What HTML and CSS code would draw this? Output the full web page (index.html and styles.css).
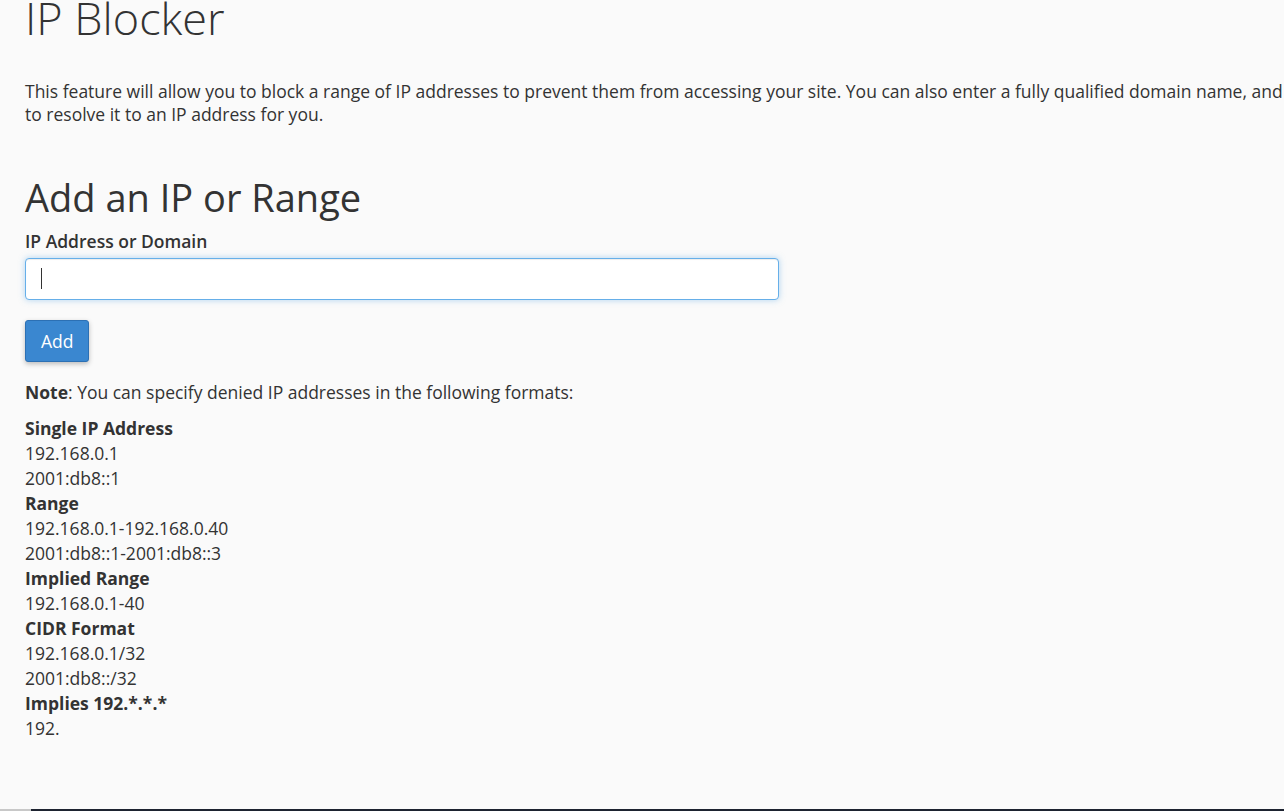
FILE: index.html
```html
<!DOCTYPE html>
<html lang="en">
<head>
    <meta charset="UTF-8">
    <meta name="viewport" content="width=device-width, initial-scale=1.0">
    <title>IP Blocker</title>
    <link rel="stylesheet" href="styles.css">
</head>
<body>

<div class="page">
    <h1 class="page-title">IP Blocker</h1>
    <p class="description">This feature will allow you to block a range of IP addresses to prevent them from accessing your site. You can also enter a fully qualified domain name, and the IP Blocker will attempt to resolve it to an IP address for you.</p>

    <h2 class="section-title">Add an IP or Range</h2>
    <div class="form-group">
        <label for="ip">IP Address or Domain</label>
        <div class="input-wrap">
            <input type="text" id="ip" name="ip">
            <span class="caret"></span>
        </div>
    </div>
    <button class="btn-add">Add</button>

    <p class="note"><strong>Note</strong>: You can specify denied IP addresses in the following formats:</p>
    <dl class="formats">
        <dt>Single IP Address</dt>
        <dd>192.168.0.1</dd>
        <dd>2001:db8::1</dd>
        <dt>Range</dt>
        <dd>192.168.0.1-192.168.0.40</dd>
        <dd>2001:db8::1-2001:db8::3</dd>
        <dt>Implied Range</dt>
        <dd>192.168.0.1-40</dd>
        <dt>CIDR Format</dt>
        <dd>192.168.0.1/32</dd>
        <dd>2001:db8::/32</dd>
        <dt>Implies 192.*.*.*</dt>
        <dd>192.</dd>
    </dl>
</div>

<div class="bottom-bar"><span class="bottom-bar-start"></span></div>

</body>
</html>
```

FILE: styles.css
```css
html, body {
    overflow: hidden;
}
body {
    margin: 0;
    background-color: #fafafa;
    color: #333;
    font-family: "Open Sans", Arial, sans-serif;
    font-size: 17.5px;
    line-height: 25px;
}
.page {
    width: 1490px;
    padding: 0 25px;
    margin-top: -7px;
}
.page-title {
    font-size: 45px;
    font-weight: 300;
    line-height: 1.1;
    margin: 0 0 37px;
}
.description {
    line-height: 23px;
    margin: 0 0 51px;
}
.section-title {
    font-size: 38px;
    font-weight: 400;
    line-height: 1.1;
    margin: 0 0 11px;
}
.form-group {
    width: 754px;
    margin-bottom: 20px;
}
.form-group label {
    display: block;
    font-weight: 600;
    margin-bottom: 4px;
}
.input-wrap {
    position: relative;
}
.form-group input {
    display: block;
    width: 100%;
    height: 42px;
    box-sizing: border-box;
    padding: 6px 12px;
    font: inherit;
    background: #fff;
    border: 1px solid #66afe9;
    border-radius: 4px;
    box-shadow: inset 0 1px 1px rgba(0, 0, 0, 0.075), 0 0 6px rgba(102, 175, 233, 0.5);
    outline: none;
}
.caret {
    position: absolute;
    left: 16px;
    top: 10px;
    width: 1px;
    height: 21px;
    background: #333;
}
.btn-add {
    display: block;
    height: 42px;
    padding: 0 15px;
    font: inherit;
    color: #fff;
    background-color: #3a87d0;
    border: 1px solid #2c70b4;
    border-radius: 3px;
    box-shadow: 0 2px 5px rgba(0, 0, 0, 0.25);
    cursor: pointer;
    margin-bottom: 18px;
}
.note {
    margin: 0 0 11px;
}
.formats {
    margin: 0;
}
.formats dt {
    font-weight: 700;
}
.formats dd {
    margin: 0;
}
.bottom-bar {
    position: fixed;
    left: 0;
    right: 0;
    bottom: 0;
    height: 2px;
    background: #1d2330;
}
.bottom-bar-start {
    display: block;
    width: 31px;
    height: 2px;
    background: #c8c8c8;
}
```
